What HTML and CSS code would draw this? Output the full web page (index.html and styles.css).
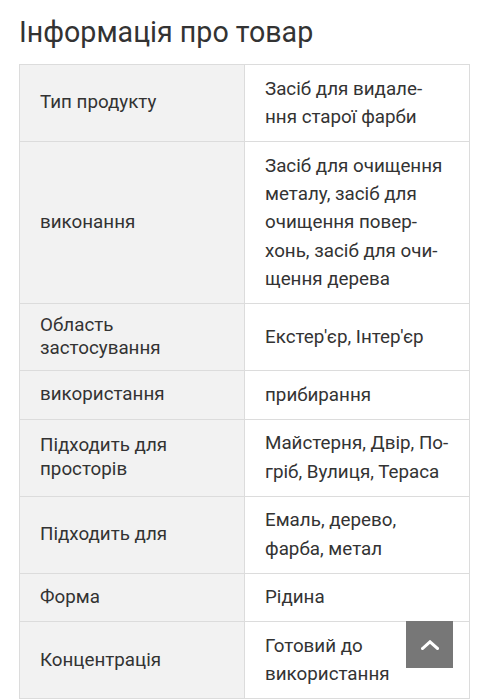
FILE: index.html
```html
<!DOCTYPE html>
<html lang="uk">
<head>
<meta charset="utf-8">
<link rel="stylesheet" href="styles.css">
</head>
<body>
<div class="page">
  <h1 class="title">Інформація про товар</h1>
  <table class="spec">
    <colgroup><col class="col-label"><col class="col-value"></colgroup>
    <tbody>
      <tr><th>Тип продукту</th><td>Засіб для видале-<br>ння старої фарби</td></tr>
      <tr><th>виконання</th><td>Засіб для очищення металу, засіб для очищення повер&shy;хонь, засіб для очи&shy;щення дерева</td></tr>
      <tr><th>Область застосування</th><td>Екстер'єр, Інтер'єр</td></tr>
      <tr><th>використання</th><td>прибирання</td></tr>
      <tr><th>Підходить для просторів</th><td>Майстерня, Двір, По&shy;гріб, Вулиця, Тераса</td></tr>
      <tr><th>Підходить для</th><td>Емаль, дерево, фарба, метал</td></tr>
      <tr><th>Форма</th><td>Рідина</td></tr>
      <tr><th>Концентрація</th><td>Готовий до використання</td></tr>
    </tbody>
  </table>
</div>
<a class="to-top" href="#" aria-label="Вгору">
  <svg width="18" height="10" viewBox="0 0 18 10"><path d="M1.5 8.5 L9 1.8 L16.5 8.5" fill="none" stroke="#fff" stroke-width="3" stroke-linecap="square"/></svg>
</a>
</body>
</html>
```
FILE: styles.css
```css
html, body {
  margin: 0;
  padding: 0;
  background: #fff;
}
body {
  font-family: Roboto, "Noto Sans", sans-serif;
  color: #333;
}
.page {
  padding: 0 19px;
}
.title {
  margin: 15px 0 15px 0;
  font-size: 28.6px;
  font-weight: 400;
  line-height: 34px;
  color: #333;
}
.spec {
  width: 100%;
  border-collapse: collapse;
  table-layout: fixed;
  border: 1px solid #dcdcdc;
}
.col-label {
  width: 50%;
}
.col-value {
  width: 50%;
}
.spec th, .spec td {
  border: 1px solid #dcdcdc;
  padding: 9.6px 20px;
  font-size: 18.8px;
  vertical-align: middle;
  text-align: left;
  font-weight: 400;
  color: #333;
}
.spec th {
  background: #f2f2f2;
  line-height: 23.3px;
}
.spec td {
  background: #fff;
  line-height: 28.4px;
}
.to-top {
  position: fixed;
  right: 36px;
  bottom: 31px;
  width: 47px;
  height: 47px;
  background: #777;
  display: flex;
  align-items: center;
  justify-content: center;
}
```
